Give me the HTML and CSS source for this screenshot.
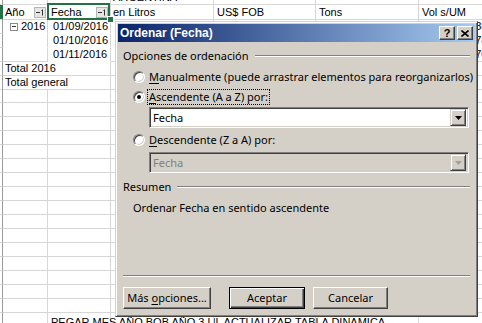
FILE: index.html
```html
<!DOCTYPE html>
<html>
<head>
<meta charset="utf-8">
<link rel="stylesheet" href="styles.css">
</head>
<body>
<div class="sheet">
  <div class="row r0"><div></div><div></div><div></div><div class="clip"><span class="cut">ARGENTINA</span></div><div></div><div></div><div></div></div>
  <div class="row hdr">
    <div class="sel-edge"></div>
    <div class="hcell">Año<span class="fbtn"><svg width="10" height="9" viewBox="0 0 10 9"><path d="M1 4.5h4" stroke="#333" stroke-width="1"/><path d="M7.5 1.5v6" stroke="#333" stroke-width="1"/><path d="M6.5 2.5h1" stroke="#333" stroke-width="1"/></svg></span></div>
    <div class="hcell selected">Fecha<span class="fbtn"><svg width="10" height="9" viewBox="0 0 10 9"><path d="M1 4.5h4" stroke="#333" stroke-width="1"/><path d="M7.5 1.5v6" stroke="#333" stroke-width="1"/><path d="M6.5 2.5h1" stroke="#333" stroke-width="1"/></svg></span><span class="handle"></span></div>
    <div>en Litros</div><div class="pad">US$ FOB</div><div class="pad">Tons</div><div class="pad">Vol s/UM</div>
  </div>
  <div class="row pv">
    <div></div>
    <div class="year"><span class="minus"></span>2016</div>
    <div class="date">01/09/2016</div>
    <div class="nb"></div><div class="nb"></div><div class="nb"></div><div class="nb num">5.883.882</div>
  </div>
  <div class="row pv">
    <div></div>
    <div class="year"></div>
    <div class="date">01/10/2016</div>
    <div class="nb"></div><div class="nb"></div><div class="nb"></div><div class="nb num">5.783.882</div>
  </div>
  <div class="row pv last">
    <div></div>
    <div class="year"></div>
    <div class="date">01/11/2016</div>
    <div></div><div></div><div></div><div class="num">5.703.882</div>
  </div>
  <div class="row">
    <div></div>
    <div class="total">Total 2016</div>
    <div></div><div></div><div></div><div></div>
  </div>
  <div class="row short">
    <div></div>
    <div class="total">Total general</div>
    <div></div><div></div><div></div><div></div>
  </div>
  <div class="row"><div></div><div></div><div></div><div></div><div></div><div></div><div></div></div>
  <div class="row"><div></div><div></div><div></div><div></div><div></div><div></div><div></div></div>
  <div class="row"><div></div><div></div><div></div><div></div><div></div><div></div><div></div></div>
  <div class="row"><div></div><div></div><div></div><div></div><div></div><div></div><div></div></div>
  <div class="row"><div></div><div></div><div></div><div></div><div></div><div></div><div></div></div>
  <div class="row"><div></div><div></div><div></div><div></div><div></div><div></div><div></div></div>
  <div class="row"><div></div><div></div><div></div><div></div><div></div><div></div><div></div></div>
  <div class="row"><div></div><div></div><div></div><div></div><div></div><div></div><div></div></div>
  <div class="row"><div></div><div></div><div></div><div></div><div></div><div></div><div></div></div>
  <div class="row"><div></div><div></div><div></div><div></div><div></div><div></div><div></div></div>
  <div class="row"><div></div><div></div><div></div><div></div><div></div><div></div><div></div></div>
  <div class="row"><div></div><div></div><div></div><div></div><div></div><div></div><div></div></div>
  <div class="row"><div></div><div></div><div></div><div></div><div></div><div></div><div></div></div>
  <div class="row"><div></div><div></div><div></div><div></div><div></div><div></div><div></div></div>
  <div class="row"><div></div><div></div><div></div><div></div><div></div><div></div><div></div></div>
  <div class="row"><div></div><div></div><div></div><div></div><div></div><div></div><div></div></div>
  <div class="row last-row"><div></div><div></div><div class="note">PEGAR MES AÑO BOB AÑO 3 UL ACTUALIZAR TABLA DINAMICA</div><div></div><div></div><div></div><div></div></div>
</div>

<div class="dialog">
  <div class="titlebar">
    <span class="title">Ordenar (Fecha)</span>
    <span class="tbtn help">?</span>
    <span class="tbtn close"><svg width="8" height="7" viewBox="0 0 8 7"><path d="M0.5 0.5l7 6M7.5 0.5l-7 6" stroke="#000" stroke-width="1.6"/></svg></span>
  </div>
  <div class="dbody">
    <div class="group"><span>Opciones de ordenación</span><span class="rule"></span></div>
    <div class="opt first"><span class="radio"></span><span class="lbl"><u>M</u>anualmente (puede arrastrar elementos para reorganizarlos)</span></div>
    <div class="opt"><span class="radio on"></span><span class="lbl focus"><u>A</u>scendente (A a Z) por:</span></div>
    <div class="combo"><span class="val">Fecha</span><span class="drop"><svg width="7" height="4" viewBox="0 0 7 4"><path d="M0 0h7L3.5 4z" fill="#000"/></svg></span></div>
    <div class="opt"><span class="radio"></span><span class="lbl"><u>D</u>escendente (Z a A) por:</span></div>
    <div class="combo disabled"><span class="val">Fecha</span><span class="drop"><svg width="7" height="4" viewBox="0 0 7 4"><path d="M0 0h7L3.5 4z" fill="#a0a0a0"/></svg></span></div>
    <div class="group g2"><span>Resumen</span><span class="rule"></span></div>
    <div class="summary">Ordenar Fecha en sentido ascendente</div>
    <div class="sep"></div>
    <div class="buttons">
      <span class="btn more"><span>Más <u>o</u>pciones...</span></span>
      <span class="btn ok"><span>Aceptar</span></span>
      <span class="btn cancel"><span>Cancelar</span></span>
    </div>
  </div>
</div>
</body>
</html>
```

FILE: styles.css
```css
* { box-sizing: border-box; }
html, body { margin: 0; padding: 0; }
body {
  width: 482px;
  height: 323px;
  overflow: hidden;
  background: #fff;
  position: relative;
  font-family: "Liberation Sans", Arial, sans-serif;
  font-size: 11px;
  color: #000;
}

/* ---------- spreadsheet ---------- */
.sheet { display: flex; flex-direction: column; }
.row {
  display: grid;
  grid-template-columns: 3px 45px 63px 103px 102px 103px 100px;
  height: 14px;
  flex: none;
}
.row > div {
  border-right: 1px solid #d6d6d6;
  border-bottom: 1px solid #d6d6d6;
  line-height: 13px;
  padding-left: 2px;
  white-space: nowrap;
  position: relative;
}
.row > div:first-child { border-right-color: #9c9c9c; padding: 0; }
.r0 { height: 5px; }
.r0 > div { overflow: hidden; }
.cut { display: block; margin-top: -9px; }
.hdr { height: 15px; }
.short { height: 13px; }
.hdr > div { line-height: 14px; }
.hdr .pad { padding-left: 3px; }
.sel-edge { background: #217346; border-right-color: #217346 !important; }
.hcell { display: flex; align-items: center; justify-content: space-between; padding-right: 1px; }
.hcell.selected { padding-right: 2px; padding-left: 3px; }
.hcell.selected::after {
  content: "";
  position: absolute;
  left: -1px; top: -2px; right: 0; bottom: -1px;
  border: 2px solid #217346;
}
.handle {
  position: absolute;
  right: -3px; bottom: -3px;
  width: 5px; height: 5px;
  background: #217346;
  outline: 1px solid #fff;
  z-index: 2;
}
.fbtn {
  width: 12px; height: 11px;
  background: #e6e6e6;
  border: 1px solid #b4b4b4;
  display: flex; align-items: center; justify-content: center;
}
.fbtn svg { display: block; }
.pv > div.year, .pv > div.date, .pv > div.nb { border-bottom-color: transparent; }
.pv.last > div.year { border-bottom-color: #d6d6d6; }
.year { padding-left: 7px !important; display: flex; align-items: center; gap: 3px; }
.minus {
  width: 8px; height: 8px;
  border: 1px solid #8a8a8a;
  position: relative;
  background: #fff;
}
.minus::after {
  content: "";
  position: absolute;
  left: 1px; right: 1px; top: 2px;
  height: 1px;
  background: #333;
}
.date { padding-left: 5px !important; }
.total { grid-column: span 2; padding-left: 2px; }
.num { text-align: right; padding-right: 3px; }
.last-row > div { border-bottom: none; }
.note { padding-left: 3px !important; padding-top: 3px; }

/* ---------- dialog ---------- */
.dialog {
  position: absolute;
  left: 115px; top: 21px;
  width: 363px; height: 296px;
  background: #d4d0c8;
  border: 1px solid;
  border-color: #d4d0c8 #404040 #404040 #d4d0c8;
  box-shadow: inset 1px 1px #fff, inset -1px -1px #808080;
  padding: 2px;
  display: flex;
  flex-direction: column;
  font-family: "Noto Sans", sans-serif;
  font-size: 11px;
  color: #000;
  z-index: 5;
}
.titlebar {
  height: 18px;
  flex: none;
  background: linear-gradient(to right, #0a246a, #a6caf0);
  display: flex;
  align-items: center;
  padding: 0 2px 0 2px;
  gap: 2px;
}
.title {
  flex: 1;
  color: #fff;
  font-family: "Liberation Sans", Arial, sans-serif;
  font-weight: bold;
  font-size: 12px;
  line-height: 16px;
}
.tbtn {
  width: 16px; height: 14px;
  background: #d4d0c8;
  border: 1px solid;
  border-color: #fff #404040 #404040 #fff;
  box-shadow: inset -1px -1px #808080;
  display: flex; align-items: center; justify-content: center;
  font-family: "Liberation Sans", Arial, sans-serif;
  font-weight: bold;
  font-size: 11px;
  line-height: 12px;
}
.dbody {
  padding: 6px 5px 0 5px;
  display: flex;
  flex-direction: column;
}
.group { display: flex; align-items: center; gap: 6px; height: 16px; line-height: 16px; white-space: nowrap; }
.rule { flex: 1; height: 2px; border-top: 1px solid #808080; border-bottom: 1px solid #fff; }
.opt { display: flex; align-items: center; gap: 4px; height: 16px; line-height: 14px; margin-left: 10px; margin-top: 4px; white-space: nowrap; }
.opt.first { margin-top: 5px; }
.radio {
  width: 12px; height: 12px;
  border-radius: 50%;
  background: #fff;
  border: 1px solid;
  border-color: #808080 #fff #fff #808080;
  box-shadow: inset 1px 1px #404040, inset -1px -1px #d4d0c8;
  position: relative;
  flex: none;
}
.radio.on::after {
  content: "";
  position: absolute;
  left: 3px; top: 3px;
  width: 4px; height: 4px;
  border-radius: 50%;
  background: #000;
}
.lbl u { text-decoration-thickness: 1px; text-underline-offset: 2px; }
.focus { outline: 1px dotted #000; outline-offset: 0; padding: 0 1px; margin-left: -1px; }
.combo {
  margin: 2px 0 0 26px;
  width: 320px; height: 21px;
  background: #fff;
  border: 1px solid;
  border-color: #808080 #fff #fff #808080;
  box-shadow: inset 1px 1px #404040, inset -1px -1px #d4d0c8;
  display: flex;
  align-items: center;
  justify-content: space-between;
  padding: 2px 2px 2px 3px;
}
.combo .val { line-height: 15px; }
.drop {
  width: 16px; height: 17px;
  background: #d4d0c8;
  border: 1px solid;
  border-color: #d4d0c8 #404040 #404040 #d4d0c8;
  box-shadow: inset 1px 1px #fff, inset -1px -1px #808080;
  display: flex; align-items: center; justify-content: center;
}
.drop svg { display: block; }
.combo.disabled { background: #d4d0c8; margin-top: 4px; }
.combo.disabled .val { color: #808080; }
.g2 { margin-top: 6px; }
.summary { margin: 5px 0 0 10px; height: 16px; line-height: 16px; }
.sep { margin-top: 59px; height: 2px; border-top: 1px solid #808080; border-bottom: 1px solid #fff; }
.buttons { display: flex; margin-top: 10px; }
.btn {
  height: 22px;
  background: #d4d0c8;
  border: 1px solid;
  border-color: #fff #404040 #404040 #fff;
  box-shadow: inset -1px -1px #808080;
  display: flex; align-items: center; justify-content: center;
  line-height: 16px;
  white-space: nowrap;
}
.btn u { text-underline-offset: 2px; }
.more { width: 88px; }
.ok {
  width: 76px; margin-left: 18px;
  border-color: #000;
  box-shadow: inset 1px 1px #fff, inset -1px -1px #404040, inset -2px -2px #808080;
}
.cancel { width: 75px; margin-left: 8px; }
```
